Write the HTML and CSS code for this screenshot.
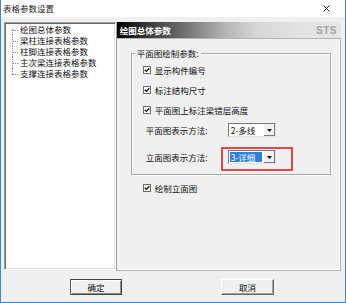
FILE: index.html
```html
<!DOCTYPE html>
<html lang="zh-CN">
<head>
    <meta charset="UTF-8">
    <title>表格参数设置</title>
    <link rel="stylesheet" href="styles.css">
</head>
<body>
    <div class="dialog">
        <div class="titlebar">
            <span class="title">表格参数设置</span>
            <svg class="close" width="7" height="7" viewBox="0 0 7 7">
                <path d="M0.5 0.5 L6.5 6.5 M6.5 0.5 L0.5 6.5" stroke="#222" stroke-width="1"/>
            </svg>
        </div>

        <div class="dialog-body">
            <div class="content">
                <ul class="tree">
                    <li>绘图总体参数</li>
                    <li>梁柱连接表格参数</li>
                    <li>柱脚连接表格参数</li>
                    <li>主次梁连接表格参数</li>
                    <li>支撑连接表格参数</li>
                </ul>

                <div class="page">
                    <div class="page-head">
                        <span class="page-title">绘图总体参数</span>
                        <span class="brand">STS</span>
                    </div>
                    <div class="page-box">
                        <div class="group">
                            <span class="legend">平面图绘制参数:</span>
                            <div class="check-row">
                                <svg class="check" width="8" height="8" viewBox="0 0 8 8"><rect x="0.5" y="0.5" width="7" height="7" fill="#fff" stroke="#6e6e6e"/><path d="M1.8 3.8 L3.3 5.4 L6.3 2.2" fill="none" stroke="#111" stroke-width="1.3"/></svg>
                                <span>显示构件编号</span>
                            </div>
                            <div class="check-row">
                                <svg class="check" width="8" height="8" viewBox="0 0 8 8"><rect x="0.5" y="0.5" width="7" height="7" fill="#fff" stroke="#6e6e6e"/><path d="M1.8 3.8 L3.3 5.4 L6.3 2.2" fill="none" stroke="#111" stroke-width="1.3"/></svg>
                                <span>标注结构尺寸</span>
                            </div>
                            <div class="check-row">
                                <svg class="check" width="8" height="8" viewBox="0 0 8 8"><rect x="0.5" y="0.5" width="7" height="7" fill="#fff" stroke="#6e6e6e"/><path d="M1.8 3.8 L3.3 5.4 L6.3 2.2" fill="none" stroke="#111" stroke-width="1.3"/></svg>
                                <span>平面图上标注梁错层高度</span>
                            </div>
                            <div class="field-row">
                                <span class="field-label">平面图表示方法:</span>
                                <div class="combo">
                                    <span class="combo-text">2-多线</span>
                                    <span class="combo-btn"><svg width="5" height="3" viewBox="0 0 5 3"><path d="M0 0 H5 L2.5 3 Z" fill="#111"/></svg></span>
                                </div>
                            </div>
                            <div class="field-row second">
                                <span class="field-label">立面图表示方法:</span>
                                <div class="combo marked">
                                    <span class="combo-text selected">3-详细</span>
                                    <span class="combo-btn"><svg width="5" height="3" viewBox="0 0 5 3"><path d="M0 0 H5 L2.5 3 Z" fill="#111"/></svg></span>
                                </div>
                            </div>
                        </div>

                        <div class="check-row outer">
                            <svg class="check" width="8" height="8" viewBox="0 0 8 8"><rect x="0.5" y="0.5" width="7" height="7" fill="#fff" stroke="#6e6e6e"/><path d="M1.8 3.8 L3.3 5.4 L6.3 2.2" fill="none" stroke="#111" stroke-width="1.3"/></svg>
                            <span>绘制立面图</span>
                        </div>
                    </div>
                </div>
            </div>

            <div class="buttons">
                <button class="btn btn-default">确定</button>
                <button class="btn">取消</button>
            </div>
        </div>
    </div>
</body>
</html>
```

FILE: styles.css
```css
body {
    margin: 0;
    padding: 0;
    background-color: #f0f0f0;
    font-family: "Noto Sans CJK SC", "Noto Sans", sans-serif;
    font-size: 8.5px;
    color: #111;
}

.dialog {
    width: 346px;
    height: 303px;
    box-sizing: border-box;
    border: 1px solid #3b8ad9;
    border-top: none;
    background-color: #f0f0f0;
}

.titlebar {
    height: 17px;
    background-color: #fff;
    display: flex;
    align-items: center;
    justify-content: space-between;
    padding: 0 15px 0 2px;
}

.title {
    line-height: 17px;
    color: #222;
}

.close {
    display: block;
    margin-top: -1px;
}

.dialog-body {
    padding: 5px 4px 0 3px;
}

.content {
    display: flex;
    height: 249px;
}

/* дерево слева */
.tree {
    list-style: none;
    margin: 0;
    padding: 1px 0 0;
    width: 112px;
    height: 248px;
    box-sizing: border-box;
    background-color: #fff;
    border: 1px solid;
    border-color: #a0a0a0 #fff #fff #a0a0a0;
    box-shadow: inset 1px 1px 0 #696969, inset -1px -1px 0 #e3e3e3;
}

.tree li {
    position: relative;
    height: 11px;
    line-height: 11px;
    padding-left: 15px;
    white-space: nowrap;
}

.tree li::before {
    content: "";
    position: absolute;
    left: 7px;
    top: 6px;
    width: 6px;
    border-top: 1px dotted #8a8a8a;
}

.tree li::after {
    content: "";
    position: absolute;
    left: 7px;
    top: 0;
    bottom: 0;
    border-left: 1px dotted #8a8a8a;
}

.tree li:first-child::after {
    top: 5px;
}

.tree li:last-child::after {
    bottom: 5px;
}

/* правая страница */
.page {
    width: 225px;
    display: flex;
    flex-direction: column;
    border-left: 1px solid #a0a0a0;
}

.page-head {
    height: 16px;
    display: flex;
    align-items: center;
    justify-content: space-between;
    padding: 0 4px 0 3px;
    background: linear-gradient(to right, #000 0%, #3a3a3a 14%, #686868 28%, #b4b4b4 48%, #d6d6d6 62%, #e2e2e2 80%, #e6e6e6 100%);
}

.page-title {
    color: #fff;
    font-weight: bold;
}

.brand {
    font-family: "Liberation Sans", Arial, sans-serif;
    font-weight: bold;
    font-size: 10px;
    color: #a4a4a4;
    letter-spacing: 0.5px;
}

.page-box {
    flex: 1;
    border: 1px solid #b4b4b4;
    border-left: none;
    box-shadow: inset -1px -1px 0 #fff;
}

.group {
    position: relative;
    margin: 14px 9px 0 14px;
    padding: 6px 0 7px;
    border: 1px solid #a8a8a8;
    box-shadow: 1px 1px 0 #fff, inset 1px 1px 0 #fff;
}

.legend {
    position: absolute;
    left: 3px;
    top: -7px;
    padding: 0 2px;
    line-height: 12px;
    background-color: #f0f0f0;
}

.check-row {
    display: flex;
    align-items: center;
    height: 20px;
    padding-left: 11px;
}

.check {
    display: block;
    margin-right: 4px;
}

.check-row.outer {
    margin: 3px 0 0 26px;
    padding-left: 0;
}

.field-row {
    display: flex;
    align-items: center;
    height: 20px;
    padding-left: 14px;
}

.field-row.second {
    margin-top: 7px;
}

.field-label {
    width: 82px;
}

.combo {
    position: relative;
    display: flex;
    width: 48px;
    height: 14px;
    box-sizing: border-box;
    background-color: #fff;
    border: 1px solid;
    border-color: #7a7a7a #e3e3e3 #e3e3e3 #7a7a7a;
}

.combo-text {
    flex: 1;
    margin: 1px;
    line-height: 10px;
    padding-left: 1px;
    white-space: nowrap;
}

.combo-text.selected {
    background-color: #2f7fe0;
    color: #fff;
}

.combo-btn {
    width: 11px;
    display: flex;
    align-items: center;
    justify-content: center;
    background-color: #f0f0f0;
    border-left: 1px solid #fff;
    box-shadow: inset -1px -1px 0 #7a7a7a;
}

.combo.marked::after {
    content: "";
    position: absolute;
    left: -8px;
    top: -4px;
    right: -18px;
    bottom: -8px;
    border: 2px solid #e04848;
}

.buttons {
    display: flex;
    gap: 99px;
    padding-left: 66px;
    margin-top: 8px;
}

.btn {
    height: 16px;
    width: 52px;
    padding: 0;
    font-family: inherit;
    font-size: 8.5px;
    color: #111;
    background-color: #f0f0f0;
    border: 1px solid;
    border-color: #fff #696969 #696969 #fff;
    box-shadow: inset -1px -1px 0 #a0a0a0;
    line-height: 13px;
}

.btn-default {
    border-color: #444 #444 #444 #5a5a5a;
    box-shadow: inset 1px 1px 0 #fff, inset -1px -1px 0 #8a8a8a;
}

.btn + .btn {
    width: 53px;
}
```
